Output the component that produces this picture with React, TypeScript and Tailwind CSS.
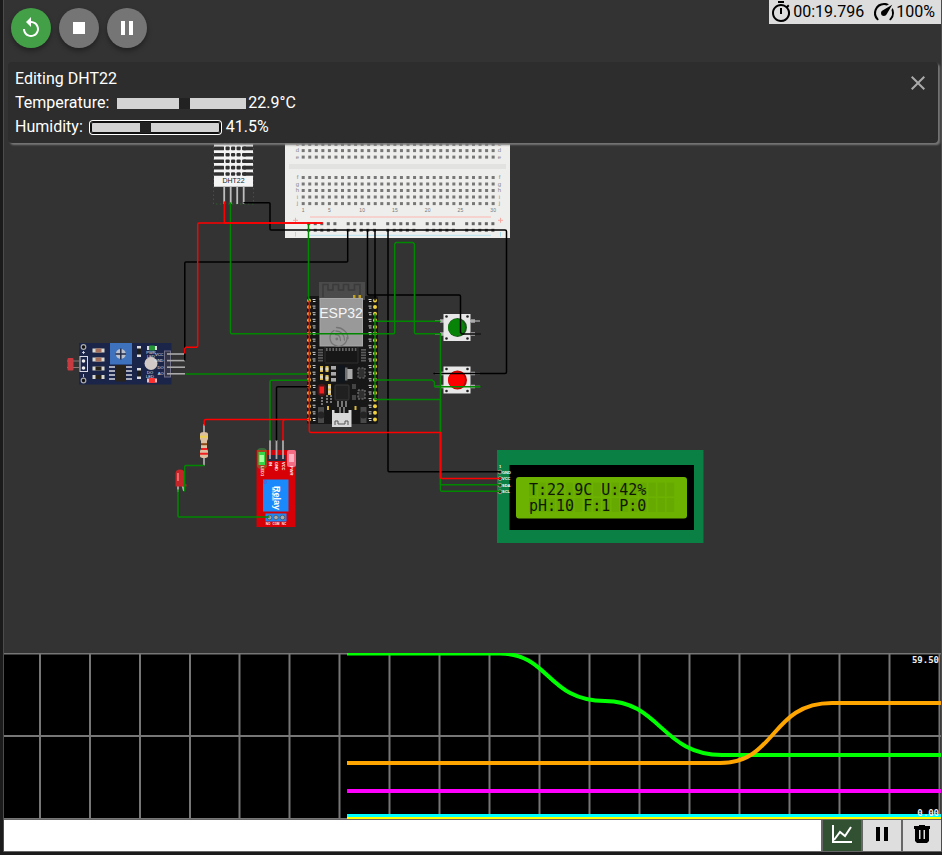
import { useState } from "react";
import type { ReactNode } from "react";
import { MdReplay, MdStop, MdPause, MdOutlineTimer, MdClose } from "react-icons/md";

const range = (n: number) => Array.from({ length: n }, (_, i) => i);

const sliderClass =
  "mx-0.5 h-[11px] w-[129px] appearance-none bg-[#d3d3d3] outline-none [&::-webkit-slider-thumb]:h-[11px] [&::-webkit-slider-thumb]:w-[11px] [&::-webkit-slider-thumb]:appearance-none [&::-webkit-slider-thumb]:bg-[#222]";

function RoundButton({ label, tone, children }: { label: string; tone: string; children: ReactNode }) {
  return (
    <button
      type="button"
      aria-label={label}
      className={`flex size-10 items-center justify-center rounded-full text-2xl text-white shadow-[0_3px_5px_rgba(0,0,0,0.35)] ${tone}`}
    >
      {children}
    </button>
  );
}

function Wire({ d, color }: { d: string; color: string }) {
  return <path d={d} fill="none" stroke={color} strokeWidth="1.5" strokeLinejoin="round" strokeLinecap="round" />;
}

function Breadboard() {
  const col = (i: number) => 303.2 + i * 6.55;
  const rows: [string, number][] = [
    ["c", 144.3], ["d", 150.6], ["e", 157.1], ["f", 177.5], ["g", 184], ["h", 190.5], ["i", 197], ["j", 203.6],
  ];
  return (
    <g>
      <rect x="285" y="90" width="225" height="148" fill="#eeeeec" />
      <rect x="289" y="164" width="217" height="5" fill="#e2e2e0" />
      {rows.map(([name, y]) => (
        <g key={name}>
          {range(30).map((i) => (
            <rect key={i} x={col(i) - 1.5} y={y - 1.5} width="3" height="3" fill="#777" />
          ))}
          <text x="297.5" y={y + 1.5} fontSize="6" textAnchor="middle" fill="#888">{name}</text>
          <text x="499.5" y={y + 1.5} fontSize="6" textAnchor="middle" fill="#888">{name}</text>
        </g>
      ))}
      {[1, 5, 10, 15, 20, 25, 30].map((n) => (
        <text key={n} x={col(n - 1)} y="212" fontSize="5" textAnchor="middle" fill="#777">{n}</text>
      ))}
      {range(5).map((g) =>
        range(5).map((i) => (
          <g key={`${g}-${i}`} fill="#666">
            <rect x={307.2 + g * 39.5 + i * 6.55} y="222.2" width="3" height="3" />
            <rect x={307.2 + g * 39.5 + i * 6.55} y="228.8" width="3" height="3" />
          </g>
        )),
      )}
      <path d="M310 217H491" stroke="#f7c8c4" strokeWidth="1.5" />
      <path d="M310 235.3H491" stroke="#bfe4ee" strokeWidth="1.2" />
      <path d="M293 220.3h5M295.5 217.8v5M498 220.3h5M500.5 217.8v5" stroke="#f5a9a3" strokeWidth="1" />
      <path d="M295.5 232v4.500M500.5 232v4.500" stroke="#a5dbea" strokeWidth="1" />
    </g>
  );
}

function DhtSensor() {
  return (
    <g>
      <rect x="213.500" y="144" width="40" height="60" fill="none" stroke="#2f5f2f" strokeDasharray="1.500 2.500" strokeWidth="1" />
      <rect x="214" y="118" width="39" height="68.500" fill="#f4f4f4" />
      {range(8).map((i) => {
        const y = 127.4 + i * 6.4;
        return (
          <g key={i} fill="#303030">
            <rect x="214" y={y} width="10" height="3.600" rx="0.500" />
            {range(4).map((c) => (
              <rect key={c} x={225.500 + c * 5.500} y={y} width="4.200" height="3.600" rx="1" />
            ))}
            <rect x="243.500" y={y} width="9.500" height="3.600" rx="0.500" />
          </g>
        );
      })}
      <rect x="214" y="176" width="39" height="10.500" fill="#f4f4f4" />
      <text x="233.500" y="183" fontSize="7" textAnchor="middle" fill="#222">DHT22</text>
      {[224.2, 230.7, 237.2, 243.7].map((x) => (
        <path key={x} d={`M${x} 186.500V204`} stroke="#bdbdbd" strokeWidth="1.800" />
      ))}
    </g>
  );
}

function Esp32() {
  const pinY = (i: number) => 300.5 + i * 6.61;
  return (
    <g>
      <rect x="307" y="296" width="71" height="128" rx="2" fill="#171717" />
      <rect x="319" y="282" width="46" height="18" fill="#4b4b4b" />
      <path d="M323 297V284.500H328V290H333V284.500H338.500V290H343.500V284.500H348.500V290H354.500V284.500H360V296" fill="none" stroke="#3b3b3b" strokeWidth="1.600" />
      <rect x="353" y="295" width="2.500" height="3" fill="#c3a11c" />
      <rect x="358.500" y="295" width="2.500" height="3" fill="#c3a11c" />
      <rect x="320" y="298.500" width="42.500" height="47.500" fill="#999" stroke="#a8a8a8" strokeWidth="1" />
      <text x="341" y="318" fontSize="14" textAnchor="middle" fill="#f5f5f5" className="font-['Liberation_Sans',Arial,sans-serif]">ESP32</text>
      <g fill="none" stroke="#757575" strokeWidth="1.300" strokeLinecap="round">
        <path d="M334 330.500a8.500 8.500 0 1 0 13 7M336.500 327.500c6 0 11.500 5 11.500 11M336 331c5 0 8.500 3.500 8.500 9M335.500 334.500c3.500 0 5 2 5 6" />
      </g>
      <circle cx="336.800" cy="339" r="1.400" fill="#757575" />
      {range(10).map((i) => (
        <rect key={i} x={326 + i * 3.2} y="348" width="1.600" height="3" fill="#666" />
      ))}
      <path d="M325 347V362M325 363H358V347" fill="none" stroke="#303030" strokeWidth="1" />
      {range(5).map((i) => (
        <g key={i} fill="#5a5a5a">
          <rect x="318" y={349 + i * 2.7} width="5" height="1.700" />
          <rect x="361" y={349 + i * 2.7} width="5" height="1.700" />
        </g>
      ))}
      {range(19).map((i) => (
        <g key={i}>
          <circle cx="309" cy={pinY(i)} r="2" fill="#e5b93d" />
          <circle cx="375" cy={pinY(i)} r="2" fill="#f0d03c" />
          <path d={`M312.500 ${pinY(i) - 1}h3M313 ${pinY(i) + 1}h2.500M368.500 ${pinY(i) - 1}h3M369 ${pinY(i) + 1}h2.500`} stroke="#d5d5d5" strokeWidth="1" />
        </g>
      ))}
      {[[320, 366], [325.500, 366], [320, 374], [325.500, 375], [328, 384], [328, 389]].map(([x, y]) => (
        <g key={`${x}-${y}`}>
          <rect x={x} y={y} width="3" height="6" fill="#d9b93f" />
          <rect x={x} y={y + 1.5} width="3" height="3" fill="#ddd4bd" />
        </g>
      ))}
      {[367, 373, 379].map((y) => (
        <rect key={y} x="331" y={y - 1} width="5" height="3.600" fill="#a9a9a9" />
      ))}
      <rect x="338" y="365" width="8" height="18" fill="#11161c" />
      <rect x="346.500" y="369" width="6" height="10" fill="#aaa" />
      <rect x="345" y="367.500" width="2.500" height="13" fill="#707070" />
      <rect x="358" y="368" width="7" height="10" fill="#303030" stroke="#737373" strokeWidth="1" strokeDasharray="2 1.500" />
      <rect x="358" y="390" width="7" height="9" fill="#303030" stroke="#858585" strokeWidth="1" strokeDasharray="2 1.500" />
      <rect x="335" y="385" width="14" height="15" rx="1" fill="#202020" stroke="#393939" strokeWidth="1" />
      <rect x="352" y="384" width="4" height="5" fill="#444" />
      <rect x="352" y="395" width="4" height="5" fill="#444" />
      <rect x="317.500" y="384" width="8.500" height="12" rx="4" fill="#aa171d" opacity="0.35" />
      <rect x="319.500" y="386.500" width="4.500" height="7" fill="#f22020" />
      <path d="M322 397v8M327 395v9M331 395v9" stroke="#777" strokeWidth="2" strokeDasharray="2 1" />
      <path d="M338 401v6M342 401v6M346 401v6M340 407v6M344 407v6" stroke="#777" strokeWidth="2" />
      <rect x="318" y="407" width="6" height="16" fill="#484848" />
      <rect x="360.500" y="407" width="6" height="16" fill="#484848" />
      <circle cx="321" cy="415" r="3.500" fill="#242424" />
      <circle cx="363.500" cy="415" r="3.500" fill="#242424" />
      <path d="M332 410h2.500v3h14v-3h3v17H332z" fill="#d8d8d8" />
      <path d="M335 425v-4h3v3h7v-3h3v4" fill="none" stroke="#555" strokeWidth="1" />
      <rect x="327" y="406" width="2" height="4" fill="#d9b93f" />
      <rect x="354.500" y="406" width="2" height="4" fill="#d9b93f" />
    </g>
  );
}

function PhotoSensor() {
  return (
    <g>
      <path d="M67 361h12M67 367.500h12" stroke="#8b7777" strokeWidth="1" />
      <rect x="67.500" y="358" width="6" height="12.500" rx="1" fill="#c73a40" />
      <rect x="79" y="343" width="92.500" height="41.500" fill="#1b2449" />
      <rect x="80" y="356.500" width="7.500" height="15" fill="none" stroke="#d8d8e6" strokeWidth="1" />
      <circle cx="83.500" cy="361" r="1.800" fill="#eee" />
      <circle cx="83.500" cy="368" r="1.800" fill="#eee" />
      <circle cx="83.500" cy="347" r="2.300" fill="#111" stroke="#aaa" strokeWidth="1.200" />
      <circle cx="83.500" cy="380.500" r="2.300" fill="#111" stroke="#aaa" strokeWidth="1.200" />
      <path d="M83.500 351v3M82 352.500h3M83.500 374v3" stroke="#e0e0ef" strokeWidth="0.800" />
      {[350.500, 359.500, 368.500, 377].map((y, i) => (
        <g key={y}>
          <rect x="92.500" y={y - 2} width="12" height="4" fill="#d9d9d2" />
          <rect x="95.500" y={y - 2} width="6" height="4" fill={i < 2 ? "#a66f5b" : "#27231a"} />
        </g>
      ))}
      <rect x="110" y="343" width="22" height="21.500" fill="#3e72bc" />
      <circle cx="120.800" cy="354" r="5" fill="#b9c0ce" />
      <path d="M115.500 354h10.500M120.800 348.500v11" stroke="#242b48" strokeWidth="1.500" />
      {range(4).map((i) => (
        <path key={i} d={`M109 ${367 + i * 4}h23`} stroke="#d9d9df" strokeWidth="1.500" />
      ))}
      <rect x="115" y="365" width="11" height="16.500" fill="#28231b" />
      <rect x="137" y="346" width="4" height="11" fill="#ddd" />
      <rect x="137" y="348.500" width="4" height="6" fill="#1d1d1d" />
      <rect x="137" y="368" width="4" height="11" fill="#ddd" />
      <rect x="137" y="370.500" width="4" height="6" fill="#1d1d1d" />
      <rect x="147" y="346" width="10" height="4" fill="#ddd" />
      <rect x="149" y="345.500" width="6" height="5" rx="1" fill="#249638" />
      <rect x="147" y="378.500" width="10" height="4" fill="#f5baba" />
      <rect x="149" y="378" width="6" height="5" rx="1" fill="#ff3030" />
      <g fill="#e8e8f4" fontSize="4" textAnchor="middle">
        <text x="151" y="354">PWR</text>
        <text x="151" y="357.500">LED</text>
        <text x="150" y="374">DO</text>
        <text x="150" y="377.500">LED</text>
      </g>
      <circle cx="151" cy="363.500" r="6.500" fill="#d1c9c7" />
      <rect x="164.500" y="351" width="6" height="26" fill="#343447" stroke="#71718c" strokeWidth="1" />
      {["VCC", "GND", "DO", "AO"].map((name, i) => (
        <g key={name}>
          <text x="163.500" y={355.500 + i * 6.6} fontSize="4" textAnchor="end" fill="#eee">{name}</text>
          <path d={`M167 ${354 + i * 6.6}h18`} stroke="#aaa" strokeWidth="1.600" />
        </g>
      ))}
    </g>
  );
}

function Relay() {
  return (
    <g>
      <rect x="256.500" y="450" width="39" height="77" fill="#d60006" />
      <rect x="257" y="448" width="10" height="21" rx="4" fill="#49c94b" opacity="0.35" />
      <rect x="287" y="450" width="9" height="17" rx="2" fill="#f46c84" />
      <rect x="258.500" y="452" width="6.500" height="13" fill="#35d548" />
      <rect x="259.500" y="455" width="4.500" height="7" fill="#a6ff9f" />
      <rect x="289" y="454" width="5" height="8" fill="#ffb3c2" />
      <rect x="267.500" y="455" width="18" height="6" fill="#292b3e" />
      {[270, 276.500, 283].map((x) => (
        <path key={x} d={`M${x} 440V459`} stroke="#aaa" strokeWidth="1.800" />
      ))}
      <rect x="263" y="479.500" width="25.500" height="32" fill="#1989fb" />
      <circle cx="265" cy="482" r="1.500" fill="none" stroke="#6254cf" strokeWidth="0.800" />
      <text transform="translate(274 486) rotate(90)" fontSize="9" fontWeight="bold" fill="#fff">Relay</text>
      <text transform="translate(271.500 487) rotate(90)" fontSize="4" fontWeight="bold" fill="#fff">Module</text>
      <g fontSize="4" fontWeight="bold" fill="#fff">
        <text transform="translate(260.500 466) rotate(90)">LED1</text>
        <text transform="translate(269 462) rotate(90)">IN</text>
        <text transform="translate(275 462) rotate(90)">GND</text>
        <text transform="translate(282 462) rotate(90)">VCC</text>
        <text transform="translate(290 466) rotate(90)">PWR</text>
      </g>
      <g fontSize="3" fontWeight="bold" fill="#fff" textAnchor="middle">
        <text x="268" y="525">NO</text>
        <text x="276" y="525">COM</text>
        <text x="284" y="525">NC</text>
      </g>
      <rect x="265.500" y="513.500" width="21" height="8" fill="#1989fb" />
      {[269.500, 276, 282.500].map((x) => (
        <circle key={x} cx={x} cy="517.500" r="2.300" fill="#aaa" stroke="#4f6275" strokeWidth="1" />
      ))}
    </g>
  );
}

function PushButton({ cy, color, shade }: { cy: number; color: string; shade: string }) {
  return (
    <g>
      {[-6.500, 6.500].map((dy) => (
        <g key={dy}>
          <path d={`M435 ${cy + dy}h45`} stroke="#999" strokeWidth="1.600" />
          <path d={`M440 ${cy + dy}h4M471 ${cy + dy}h4`} stroke="#aaa" strokeWidth="3.500" />
        </g>
      ))}
      <rect x="443.500" y={cy - 13.5} width="27" height="27" fill="#e8e8e8" />
      {[446.500, 467.500].map((x) =>
        [-11, 11].map((dy) => <circle key={`${x}${dy}`} cx={x} cy={cy + dy} r="1.300" fill="#222" />),
      )}
      <circle cx="457.500" cy={cy} r="9.500" fill={shade} />
      <circle cx="456.500" cy={cy} r="8.500" fill={color} />
    </g>
  );
}

function Lcd() {
  return (
    <g>
      <rect x="497" y="450" width="206.500" height="93" fill="#0a8045" />
      <rect x="509.500" y="465" width="184.500" height="65" fill="#000" />
      <rect x="516" y="477" width="171" height="41.500" rx="3" fill="#6cb200" />
      {range(16).map((i) => (
        <g key={i} fill="#66a900">
          <rect x={529 + i * 9.18} y="482.500" width="7.500" height="14" />
          <rect x={529 + i * 9.18} y="498" width="7.500" height="14" />
        </g>
      ))}
      <g className="font-['DejaVu_Sans_Mono',monospace]" fontSize="15" fill="#101800">
        <text x="529" y="495">T:22.9C U:42%</text>
        <text x="529" y="511">pH:10 F:1 P:0</text>
      </g>
      <text x="499" y="468" fontSize="4" fontWeight="bold" fill="#fff">1</text>
      {["GND", "VCC", "SDA", "SCL"].map((name, i) => (
        <g key={name}>
          <circle cx="500" cy={472 + i * 6.6} r="2" fill="#222" stroke="#a39f80" strokeWidth="1" />
          <text x="502" y={473.500 + i * 6.6} fontSize="4" fontWeight="bold" fill="#fff">{name}</text>
        </g>
      ))}
    </g>
  );
}

function ResistorAndLed() {
  return (
    <g>
      <path d="M204 424V466" stroke="#aaa" strokeWidth="1.800" />
      <path d="M200 434q0-2 4-2t4 2v5l-1 2v8l1 2v5q0 2-4 2t-4-2v-5l1-2v-8l-1-2z" fill="#dcc0a0" />
      <path d="M200 436.700h8" stroke="#efd14e" strokeWidth="2" />
      <path d="M201 444.200h6" stroke="#8b4b18" strokeWidth="2" />
      <path d="M201 449h6M200 453.800h8" stroke="#f02020" strokeWidth="2" />
      <path d="M178 484v8M182 484l2 7" stroke="#aaa" strokeWidth="1.800" />
      <path d="M175.500 486.500v-13q0-4 4.500-4t4.500 4v10l2 1v2z" fill="#c52529" />
      <path d="M178 473v8" stroke="#ef8585" strokeWidth="1.500" />
    </g>
  );
}

function Diagram() {
  const black = "#000";
  const red = "#f00";
  const green = "#080";
  return (
    <svg
      role="img"
      aria-label="Circuit diagram"
      viewBox="4 0 937 653"
      preserveAspectRatio="xMidYMin meet"
      className="absolute inset-0 size-full font-['Liberation_Sans',Arial,sans-serif]"
    >
      <Breadboard />
      <DhtSensor />
      <Esp32 />
      <PhotoSensor />
      <ResistorAndLed />
      <Relay />
      <PushButton cy={327.500} color="#078407" shade="#1c571c" />
      <PushButton cy={380} color="#ff0000" shade="#b50000" />
      <Lcd />

      <Wire color={black} d="M244 202.700H269Q270 202.700 270 203.700V229Q270 230 271 230H355" />
      <Wire color={black} d="M360 230H505Q506.500 230 506.500 231.500V372Q506.500 373.500 505 373.500H434" />
      <Wire color={black} d="M347.700 230V261Q347.700 262 346.700 262H186Q184.800 262 184.800 263V360" />
      <Wire color={black} d="M367.500 230V293.500Q367.500 295 369 295H459Q460.500 295 460.500 296.500V332.500L462 334H480" />
      <Wire color={black} d="M375 230V300" />
      <Wire color={black} d="M388 230V470.500Q388 471.700 389 471.700H500" />
      <Wire color={black} d="M276.500 440V388Q276.500 386.700 278 386.700H309" />
      <Wire color={green} d="M230.500 203V332.500Q230.500 333.700 232 333.700H393.500Q394.700 333.700 394.700 332.500V244L396 242.500H413L414.500 244V332.500Q414.500 333.700 416 333.700H440.500V484.700H500" />
      <Wire color={green} d="M308.500 224V300" />
      <Wire color={green} d="M375 314V399.500H440.500V490Q440.500 491.300 442 491.300H500" />
      <Wire color={green} d="M375 321.300H440" />
      <Wire color={green} d="M375 380H432L434.500 382V386.700H480" />
      <Wire color={green} d="M186 374H308" />
      <Wire color={green} d="M270 440V382Q270 380.300 271.500 380.300H308" />
      <Wire color={green} d="M204 465.500H186Q184.700 465.500 184.700 467V491" />
      <Wire color={green} d="M178 490V516Q178 517 179 517H269" />
      <Wire color={red} d="M224.300 202V223H322" />
      <Wire color={red} d="M322 223H199Q197.700 223 197.700 224.500V346L196.500 347.200H186L184.800 348.500V353" />
      <Wire color={red} d="M204.200 425V421Q204.200 419.500 206 419.500H308" />
      <Wire color={red} d="M283 440V421L284.500 419.500" />
      <Wire color={red} d="M309.300 301V431Q309.300 432.500 311 432.500H440.500V477Q440.500 478.500 442 478.500H500" />
    </svg>
  );
}

function Plot() {
  return (
    <section aria-label="Signal plot" className="relative h-[166px] shrink-0 bg-black">
      <svg viewBox="4 653 937 166" preserveAspectRatio="none" className="block size-full">
        <g stroke="#767676" strokeWidth="2">
          {range(19).map((i) => (
            <path key={i} d={`M${40 + i * 50 - (i > 3 ? 0.5 : 0)} 653V819`} />
          ))}
          <path d="M4 736H942M4 653.500H942M4 819H942" />
        </g>
        <g fill="none" strokeWidth="4">
          <path d="M347 653.500H500C550 653.500 547 701 605 701C660 701 662 755 722 755H942" stroke="#00ff00" />
          <path d="M347 763H720C777 763 770 703 832 703H942" stroke="#ffa500" />
          <path d="M347 791H942" stroke="#ff00ff" />
          <path d="M347 818H942" stroke="#ffff00" strokeWidth="2" />
          <path d="M347 815.500H942" stroke="#00ffff" strokeWidth="3" />
        </g>
      </svg>
      <div className="absolute inset-y-0 right-0.5 flex flex-col justify-between pt-px text-right font-['DejaVu_Sans_Mono',monospace] text-[9px] leading-3 font-bold text-[#eee]">
        <span>59.50</span>
        <span>0.00</span>
      </div>
    </section>
  );
}

function ConsoleButton({ label, tone, children }: { label: string; tone: string; children: ReactNode }) {
  return (
    <button
      type="button"
      aria-label={label}
      className={`flex w-10 items-center justify-center border-y border-l-2 border-[#666] pb-1 ${tone}`}
    >
      {children}
    </button>
  );
}

export default function App() {
  const [temperature, setTemperature] = useState(22.9);
  const [humidity, setHumidity] = useState(41.5);
  return (
    <div className="flex h-screen flex-col overflow-hidden bg-[#1b1b1b] pb-[3px] pl-[3px] font-[Roboto,sans-serif] text-base leading-6">
      <main className="flex min-h-0 flex-1 flex-col border-x border-[#4c4c4c]">
        <section className="relative min-h-0 flex-1 bg-[#333]">
          <Diagram />
          <div className="relative">
            <header className="flex items-start justify-between">
              <div className="flex gap-2 px-[7px] py-2">
                <RoundButton label="Restart simulation" tone="bg-[#43a047]">
                  <MdReplay />
                </RoundButton>
                <RoundButton label="Stop simulation" tone="bg-[#757575]">
                  <MdStop />
                </RoundButton>
                <RoundButton label="Pause simulation" tone="bg-[#757575]">
                  <MdPause />
                </RoundButton>
              </div>
              <div className="flex h-6 items-center bg-[#ddd] pr-1.5 text-black">
                <MdOutlineTimer className="size-6" />
                <span>00:19.796</span>
                <svg viewBox="0 0 24 24" className="ml-2 size-6" fill="currentColor" aria-hidden="true">
                  <path d="M12 16a3 3 0 0 1-3-3c0-1.120.61-2.100 1.500-2.610l9.710-5.620-5.530 9.580A3 3 0 0 1 12 16M12 3c1.810 0 3.500.5 4.970 1.320l-2.100 1.210A8 8 0 0 0 6.340 18.650c.4.400.4 1.030 0 1.410-.39.390-1.020.39-1.410 0A10 10 0 0 1 12 3M22 13a9.970 9.970 0 0 1-2.930 7.070c-.39.390-1.020.39-1.410 0a1 1 0 0 1 0-1.410A7.970 7.970 0 0 0 19.460 10.100L20.670 8A10 10 0 0 1 22 13" />
                </svg>
                <span>100%</span>
              </div>
            </header>
            <section className="mt-1.5 mr-[3px] ml-1 flex items-start justify-between rounded bg-[#2d2d2d] pt-[5px] pr-1 pb-1 pl-[7px] text-white shadow-[2px_2px_2px_#777]">
              <div>
                <h2>Editing DHT22</h2>
                <div className="flex items-center">
                  <label htmlFor="temperature" className="mr-1.5">Temperature:</label>
                  <input
                    id="temperature"
                    type="range"
                    min="-40"
                    max="80"
                    step="0.1"
                    value={temperature}
                    onChange={(e) => setTemperature(Number(e.target.value))}
                    className={sliderClass}
                  />
                  <span>{temperature.toFixed(1)}°C</span>
                </div>
                <div className="flex items-center">
                  <label htmlFor="humidity" className="mr-1.5">Humidity:</label>
                  <input
                    id="humidity"
                    type="range"
                    min="0"
                    max="100"
                    step="0.5"
                    value={humidity}
                    onChange={(e) => setHumidity(Number(e.target.value))}
                    className={`${sliderClass} rounded-xs shadow-[inset_0_0_0_1px_#101010,0_0_0_1px_#101010,0_0_0_2px_#fff]`}
                  />
                  <span className="ml-1">{humidity.toFixed(1)}%</span>
                </div>
              </div>
              <button type="button" aria-label="Close editor" className="p-1 text-2xl text-[#aaa]">
                <MdClose className="size-6" />
              </button>
            </section>
          </div>
        </section>

        <Plot />

        <div className="flex h-[33px] shrink-0 bg-white">
          <input
            type="text"
            aria-label="Serial monitor input"
            className="min-w-0 flex-1 border-y border-[#666] bg-white px-2 text-black outline-none"
          />
          <ConsoleButton label="Toggle plotter" tone="bg-[#325032] text-white">
            <svg viewBox="0 0 24 24" className="size-6" fill="none" stroke="currentColor" strokeWidth="2" aria-hidden="true">
              <path d="M3 3V20H22M4 18L10 10L15 14L21 5" />
            </svg>
          </ConsoleButton>
          <ConsoleButton label="Pause monitor" tone="bg-[#dedede] text-black">
            <MdPause className="size-6" />
          </ConsoleButton>
          <ConsoleButton label="Clear monitor" tone="bg-[#dedede] text-black">
            <svg viewBox="0 0 24 24" className="size-6" fill="currentColor" aria-hidden="true">
              <path fillRule="evenodd" d="M9 3h6v1h5v3h-1v12l-2 2H7l-2-2V7H4V4h5zM9 8v9h1.500V8zm4.500 0v9H15V8z" />
            </svg>
          </ConsoleButton>
        </div>
      </main>
    </div>
  );
}
